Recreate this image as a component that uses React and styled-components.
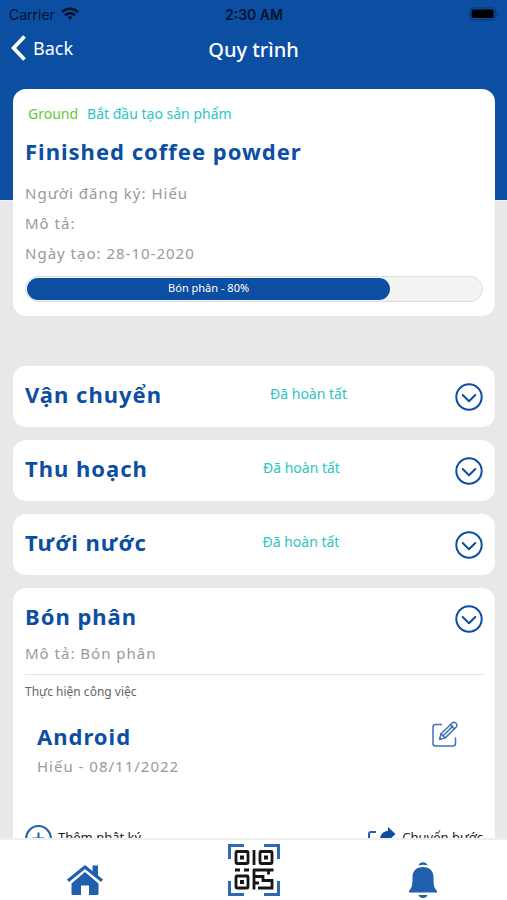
import React, { useState } from 'react'
import styled, { createGlobalStyle, ThemeProvider } from 'styled-components'

const theme = {
    colorPrimary: '#0b4ea2',
    colorIcon: '#205eae',
    colorDone: '#2cc5c5',
    colorGround: '#5fcb35',
    colorMuted: '#999',
    colorPage: '#e8e8e8',
    colorLight: '#fff',
}

const GlobalStyle = createGlobalStyle`
    * {
        box-sizing: border-box;
    }
    body {
        margin: 0;
        font-family: 'Noto Sans', 'Open Sans', sans-serif;
    }
    h1, h2, h3, p {
        margin: 0;
    }
    button {
        padding: 0;
        border: 0;
        background: none;
        font: inherit;
        color: inherit;
        cursor: pointer;
    }
    svg {
        display: block;
    }
`

const Screen = styled.div`
    display: flex;
    flex-direction: column;
    height: 100vh;
    overflow: hidden;
    background: ${props => props.theme.colorPage};
`

const Header = styled.header`
    flex: none;
    padding-bottom: 128px;
    border-bottom: 1px solid #f1f1fa;
    background: ${props => props.theme.colorPrimary};
`

const StatusBar = styled.div`
    display: grid;
    grid-template-columns: 1fr auto 1fr;
    align-items: center;
    height: 28px;
    padding: 0 8px 0 9px;
    font-family: Inter, sans-serif;
    font-size: 14px;
    color: #04122b;
`

const Carrier = styled.div`
    display: flex;
    align-items: center;
    gap: 6px;
`

const Clock = styled.div`
    font-weight: 600;
`

const Battery = styled.div`
    justify-self: end;
`

const TitleBar = styled.div`
    display: grid;
    grid-template-columns: 1fr auto 1fr;
    align-items: center;
    height: 44px;
    padding: 0 11px;
    color: ${props => props.theme.colorLight};
`

const BackButton = styled.button`
    display: flex;
    align-items: center;
    justify-self: start;
    gap: 7px;
    padding-bottom: 4px;
    font-size: 18px;
    line-height: 26px;
`

const ScreenTitle = styled.h1`
    font-size: 20px;
    font-weight: 500;
    line-height: 26px;
`

const Content = styled.main`
    flex: 1;
    min-height: 0;
    margin-top: -112px;
    padding: 0 12px 0 13px;
    overflow-y: auto;
    scrollbar-width: none;
`

const Card = styled.section`
    border-radius: 13px;
    background: ${props => props.theme.colorLight};
`

const Summary = styled(Card)`
    margin-bottom: 50px;
    padding: 12px 12px 14px;
`

const Tags = styled.div`
    display: flex;
    gap: 9px;
    margin-bottom: 9px;
    padding-left: 3px;
    font-size: 14px;
    line-height: 26px;
`

const Tag = styled.span`
    color: ${props => props.$ground ? props.theme.colorGround : props.theme.colorDone};
`

const Heading = styled.h2`
    font-size: 22px;
    font-weight: 700;
    line-height: 30px;
    letter-spacing: 1px;
    color: ${props => props.theme.colorPrimary};
`

const Muted = styled.p`
    font-size: 15px;
    line-height: 30px;
    letter-spacing: 1px;
    color: ${props => props.theme.colorMuted};
`

const Details = styled.div`
    margin: 12px 0 8px;
`

const Progress = styled.div`
    height: 26px;
    padding: 1px;
    border: 1px solid #dedede;
    border-radius: 13px;
    background: #f3f3f3;
`

const ProgressFill = styled.div`
    height: 22px;
    border-radius: 11px;
    background: ${props => props.theme.colorPrimary};
    font-size: 11px;
    line-height: 20px;
    text-align: center;
    color: ${props => props.theme.colorLight};
`

const Steps = styled.div`
    display: flex;
    flex-direction: column;
    gap: 13px;
`

const StepHead = styled.div`
    display: flex;
    align-items: center;
    justify-content: space-between;
    padding: 11px 12px ${props => props.$open ? '5px' : '16px'};
`

const ToggleButton = styled.button`
    padding-top: 6px;
`

const StepStatus = styled.span`
    font-size: 14px;
    line-height: 26px;
    color: ${props => props.theme.colorDone};
`

const StepBody = styled.div`
    padding: 0 12px 12px;
`

const TaskLabel = styled.h3`
    margin-top: 6px;
    padding-top: 6px;
    border-top: 1px solid #e4e4e4;
    font-size: 12px;
    font-weight: 400;
    line-height: 22px;
    color: #666;
`

const Task = styled.div`
    display: flex;
    justify-content: space-between;
    align-items: flex-start;
    padding: 18px 25px 0 12px;
    color: ${props => props.theme.colorIcon};
`

const Actions = styled.div`
    display: flex;
    justify-content: space-between;
    margin-top: 44px;
`

const Action = styled.button`
    display: flex;
    align-items: flex-start;
    gap: 6px;
    font-size: 13px;
    line-height: 24px;
    color: #222;
`

const TabBar = styled.nav`
    display: grid;
    grid-template-columns: repeat(3, 1fr);
    flex: none;
    height: 62px;
    border-top: 2px solid #efefef;
    background: ${props => props.theme.colorLight};
`

const Tab = styled.a`
    display: flex;
    align-items: center;
    justify-content: center;
    padding-top: ${props => props.$large ? '0' : '20px'};
    color: ${props => props.theme.colorIcon};
`

const WifiIcon = () => (
    <svg width="18" height="14" viewBox="0 0 18 14" fill="none" stroke="#04122b" strokeWidth="2.6">
        <path d="M1 5.2C5.6 .6 12.4 .6 17 5.2" />
        <path d="M4 8.4C6.9 5.7 11.1 5.7 14 8.4" />
        <path d="M6.3 10.3C7.8 8.9 10.2 8.9 11.7 10.3L9 13Z" fill="#04122b" stroke="none" />
    </svg>
)

const BatteryIcon = () => (
    <svg width="30" height="14" viewBox="0 0 30 14">
        <rect x=".6" y=".8" width="26" height="12" rx="4" fill="none" stroke="#083a7b" strokeWidth="1.2" />
        <rect x="2.5" y="2.6" width="22.2" height="8.5" rx="2" fill="#000" />
        <path d="M28 4.8C29.5 5.5 29.5 8.2 28 8.9Z" fill="#083a7b" />
    </svg>
)

const BackIcon = () => (
    <svg width="15" height="26" viewBox="0 0 15 26" fill="none" stroke="currentColor" strokeWidth="3.8">
        <path d="M13.5 1.5L2.6 13L13.5 24.5" />
    </svg>
)

const ToggleIcon = () => (
    <svg width="28" height="28" viewBox="0 0 28 28" fill="none" stroke="#0b4ea2" strokeWidth="2">
        <circle cx="14" cy="14" r="12.7" />
        <path d="M7.7 12L14 18.2L20.3 12" strokeLinecap="round" strokeLinejoin="round" />
    </svg>
)

const EditIcon = () => (
    <svg width="26" height="26" viewBox="0 0 26 26" fill="none" stroke="#3f74b9" strokeWidth="1.5" strokeLinecap="round" strokeLinejoin="round">
        <path d="M9.5 3.5H3.5Q1 3.5 1 6V22.5Q1 25 3.5 25H20.5Q23.5 25 23.5 22.5V17" />
        <path d="M7.6 18.4L9 12.8L20 2.2Q22 .4 24 2.2Q25.8 4.3 24 6.2L13.2 16.9Z" />
        <path d="M9 12.8L13.2 16.9M10.9 15L20.8 5.1M18.3 3.9L22.3 7.9M8 17L9.2 18" />
    </svg>
)

const AddIcon = () => (
    <svg width="27" height="27" viewBox="0 0 27 27" fill="none" stroke="#205eae" strokeWidth="2">
        <circle cx="13.5" cy="13.5" r="12.4" />
        <path d="M13.5 7.5V19.5M7.5 13.5H19.5" />
    </svg>
)

const MoveIcon = () => (
    <svg width="28" height="27" viewBox="0 0 28 27">
        <path d="M8 7H3Q1 7 1 9V23Q1 25 3 25H19Q21 25 21 23V19" fill="none" stroke="#205eae" strokeWidth="2" />
        <path d="M20 2L27.5 9L20 16V13C16 13 13.5 14 11.5 18C11.5 10 15 6 20 6Z" fill="#0b4ea2" />
    </svg>
)

const HomeIcon = () => (
    <svg width="38" height="32" viewBox="0 0 38 32" fill="currentColor">
        <path d="M19 8L32.5 19.5V29.5Q32.5 31 31 31H23V21.5H15V31H7Q5.5 31 5.5 29.5V19.5Z" />
        <path d="M2 16.8L19 3L36 16.8" fill="none" stroke="currentColor" strokeWidth="3.2" strokeLinejoin="round" />
        <path d="M26.5 1.5H32V12.5L26.5 8Z" />
    </svg>
)

const ScanIcon = () => (
    <svg width="52" height="52" viewBox="0 0 52 52" fill="none">
        <path d="M1.5 15V1.5H16M36 1.5H50.5V15M50.5 37V50.5H36M16 50.5H1.5V37" stroke="#2d69b0" strokeWidth="3" />
        <g stroke="#161616" strokeWidth="2.8">
            <rect x="8" y="7.5" width="12" height="12" rx="1" />
            <rect x="32" y="7.5" width="12" height="12" rx="1" />
            <rect x="8" y="32" width="12" height="12" rx="1" />
            <path d="M26 6V21M7 26H12M16 26H21M25 26H45.5M26 25V45.5M26 32.5H35V36.500H44V44H30M26 39H31M40.5 26V30.5" />
        </g>
        <path d="M12 11.5H16V15.5H12ZM36 11.5H40V15.5H36ZM12 36H16V40H12Z" fill="#161616" />
    </svg>
)

const BellIcon = () => (
    <svg width="30" height="38" viewBox="0 0 30 38" fill="currentColor">
        <path d="M10.5 4.5C11.5 0 18.5 0 19.5 4.5Q15 2.8 10.5 4.5Z" />
        <path d="M15 6C21.5 6 25.5 10 25.5 16C25.5 24.5 26 26.5 29 30V31.5H1V30C4 26.5 4.5 24.5 4.5 16C4.5 10 8.5 6 15 6Z" />
        <path d="M10.5 34H19.5C18.5 38 11.5 38 10.5 34Z" />
    </svg>
)

const doneSteps = ['Vận chuyển', 'Thu hoạch', 'Tưới nước']

function CurrentStep() {
    const [open, setOpen] = useState(true)

    return (
        <Card>
            <StepHead $open={open}>
                <Heading>Bón phân</Heading>
                <ToggleButton aria-label="Bón phân" aria-expanded={open} onClick={() => setOpen(!open)}>
                    <ToggleIcon />
                </ToggleButton>
            </StepHead>
            {open && (
                <StepBody>
                    <Muted>Mô tả: Bón phân</Muted>
                    <TaskLabel>Thực hiện công việc</TaskLabel>
                    <Task>
                        <div>
                            <Heading as="h3">Android</Heading>
                            <Muted>Hiếu - 08/11/2022</Muted>
                        </div>
                        <button aria-label="Android">
                            <EditIcon />
                        </button>
                    </Task>
                    <Actions>
                        <Action><AddIcon />Thêm nhật ký</Action>
                        <Action><MoveIcon />Chuyển bước</Action>
                    </Actions>
                </StepBody>
            )}
        </Card>
    )
}

function App() {
    const progress = 80

    return (
        <ThemeProvider theme={theme}>
            <GlobalStyle />
            <Screen>
                <Header>
                    <StatusBar>
                        <Carrier>Carrier <WifiIcon /></Carrier>
                        <Clock>2:30 AM</Clock>
                        <Battery><BatteryIcon /></Battery>
                    </StatusBar>
                    <TitleBar>
                        <BackButton><BackIcon />Back</BackButton>
                        <ScreenTitle>Quy trình</ScreenTitle>
                    </TitleBar>
                </Header>

                <Content>
                    <Summary>
                        <Tags>
                            <Tag $ground>Ground</Tag>
                            <Tag>Bắt đầu tạo sản phẩm</Tag>
                        </Tags>
                        <Heading>Finished coffee powder</Heading>
                        <Details>
                            <Muted>Người đăng ký: Hiếu</Muted>
                            <Muted>Mô tả:</Muted>
                            <Muted>Ngày tạo: 28-10-2020</Muted>
                        </Details>
                        <Progress>
                            <ProgressFill style={{ width: `${progress}%` }}>Bón phân - {progress}%</ProgressFill>
                        </Progress>
                    </Summary>

                    <Steps>
                        {doneSteps.map(name => (
                            <Card key={name}>
                                <StepHead>
                                    <Heading>{name}</Heading>
                                    <StepStatus>Đã hoàn tất</StepStatus>
                                    <ToggleButton aria-label={name}>
                                        <ToggleIcon />
                                    </ToggleButton>
                                </StepHead>
                            </Card>
                        ))}
                        <CurrentStep />
                    </Steps>
                </Content>

                <TabBar>
                    <Tab href="#home" aria-label="Home"><HomeIcon /></Tab>
                    <Tab href="#scan" aria-label="Scan" $large><ScanIcon /></Tab>
                    <Tab href="#alerts" aria-label="Alerts"><BellIcon /></Tab>
                </TabBar>
            </Screen>
        </ThemeProvider>
    )
}

export default App
